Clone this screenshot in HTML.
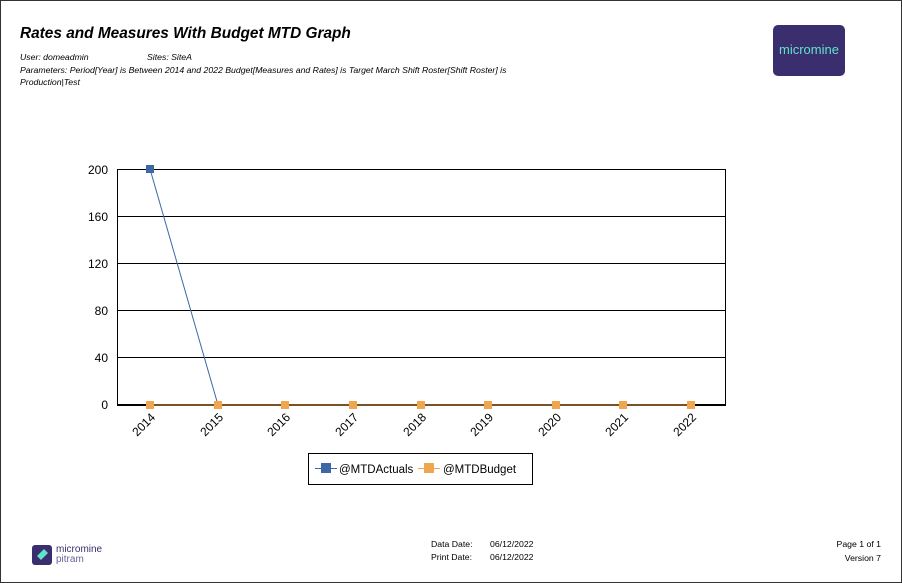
<!DOCTYPE html><html><head><style>
body{margin:0;width:902px;height:583px;overflow:hidden;background:#fff;font-family:"Liberation Sans",sans-serif;}
.frame{position:absolute;left:0;top:0;width:900px;height:581px;border:1px solid #333;}
.t{position:absolute;white-space:nowrap;}
</style></head><body><div class="frame"></div>
<div class="t" style="left:20px;top:25px;font-size:15.4px;font-weight:bold;font-style:italic;">Rates and Measures With Budget MTD Graph</div>
<div class="t" style="left:20px;top:52px;font-size:8.7px;font-style:italic;">User: domeadmin</div>
<div class="t" style="left:147px;top:52px;font-size:8.7px;font-style:italic;">Sites: SiteA</div>
<div class="t" style="left:20px;top:65px;font-size:8.7px;font-style:italic;">Parameters: Period[Year] is Between 2014 and 2022 Budget[Measures and Rates] is Target March Shift Roster[Shift Roster] is</div>
<div class="t" style="left:20px;top:77px;font-size:8.7px;font-style:italic;">Production|Test</div>
<div style="position:absolute;left:773px;top:25px;width:72px;height:51px;background:#3b2e6e;border-radius:5px;"></div>
<div class="t" style="left:773px;top:42px;width:72px;text-align:center;color:#5fe3c9;font-size:13px;">micromine</div>
<svg style="position:absolute;left:0;top:0" width="902" height="583" font-family="Liberation Sans" font-size="12">
<g stroke="#000" stroke-width="1">
<rect x="117.5" y="169.5" width="608" height="236" fill="none"/>
<line x1="117" y1="216.5" x2="725" y2="216.5"/><line x1="117" y1="263.5" x2="725" y2="263.5"/><line x1="117" y1="310.5" x2="725" y2="310.5"/><line x1="117" y1="357.5" x2="725" y2="357.5"/>
<line x1="117" y1="405" x2="725" y2="405" stroke-width="2"/>
</g>
<g text-anchor="end"><text x="108" y="174">200</text><text x="108" y="221">160</text><text x="108" y="268">120</text><text x="108" y="315">80</text><text x="108" y="362">40</text><text x="108" y="409">0</text></g>
<line x1="150" y1="169" x2="218" y2="405" stroke="#3d68a3"/>
<line x1="150" y1="405" x2="691" y2="405" stroke="#f0a54f"/>
<rect x="146" y="165" width="8" height="8" fill="#3d68a3"/>
<g fill="#f0a54f">
<rect x="146" y="401" width="8" height="8"/><rect x="214" y="401" width="8" height="8"/><rect x="281" y="401" width="8" height="8"/><rect x="349" y="401" width="8" height="8"/><rect x="417" y="401" width="8" height="8"/><rect x="484" y="401" width="8" height="8"/><rect x="552" y="401" width="8" height="8"/><rect x="619" y="401" width="8" height="8"/><rect x="687" y="401" width="8" height="8"/></g>
<g font-size="12">
<text transform="translate(156,418) rotate(-45)" text-anchor="end">2014</text>
<text transform="translate(224,418) rotate(-45)" text-anchor="end">2015</text>
<text transform="translate(291,418) rotate(-45)" text-anchor="end">2016</text>
<text transform="translate(359,418) rotate(-45)" text-anchor="end">2017</text>
<text transform="translate(427,418) rotate(-45)" text-anchor="end">2018</text>
<text transform="translate(494,418) rotate(-45)" text-anchor="end">2019</text>
<text transform="translate(562,418) rotate(-45)" text-anchor="end">2020</text>
<text transform="translate(629,418) rotate(-45)" text-anchor="end">2021</text>
<text transform="translate(697,418) rotate(-45)" text-anchor="end">2022</text></g>
<rect x="308.5" y="453.5" width="224" height="31" fill="none" stroke="#000"/>
<line x1="315" y1="468.5" x2="337" y2="468.5" stroke="#3d68a3"/><rect x="321" y="463" width="10" height="10" fill="#3d68a3"/>
<text x="339" y="473" font-size="11.5">@MTDActuals</text>
<line x1="418" y1="468.5" x2="440" y2="468.5" stroke="#f0a54f"/><rect x="424" y="463" width="10" height="10" fill="#f0a54f"/>
<text x="443" y="473" font-size="11.5">@MTDBudget</text>
<rect x="32" y="545" width="20" height="20" rx="3" fill="#3b2e6e"/>
<path d="M37 556 L44 549 L48 553 L41 560 Z" fill="#5fe3c9"/>
</svg>
<div class="t" style="left:56px;top:545px;font-size:10px;color:#3b2e6e;line-height:10px;">micromine<br><span style="color:#6a5f9a">pitram</span></div>
<div class="t" style="left:431px;top:539px;font-size:8.7px;">Data Date:</div><div class="t" style="left:490px;top:539px;font-size:8.7px;">06/12/2022</div>
<div class="t" style="left:431px;top:552px;font-size:8.7px;">Print Date:</div><div class="t" style="left:490px;top:552px;font-size:8.7px;">06/12/2022</div>
<div class="t" style="right:21px;top:539px;font-size:8.7px;">Page 1 of 1</div>
<div class="t" style="right:21px;top:553px;font-size:8.7px;">Version 7</div>
</body></html>
